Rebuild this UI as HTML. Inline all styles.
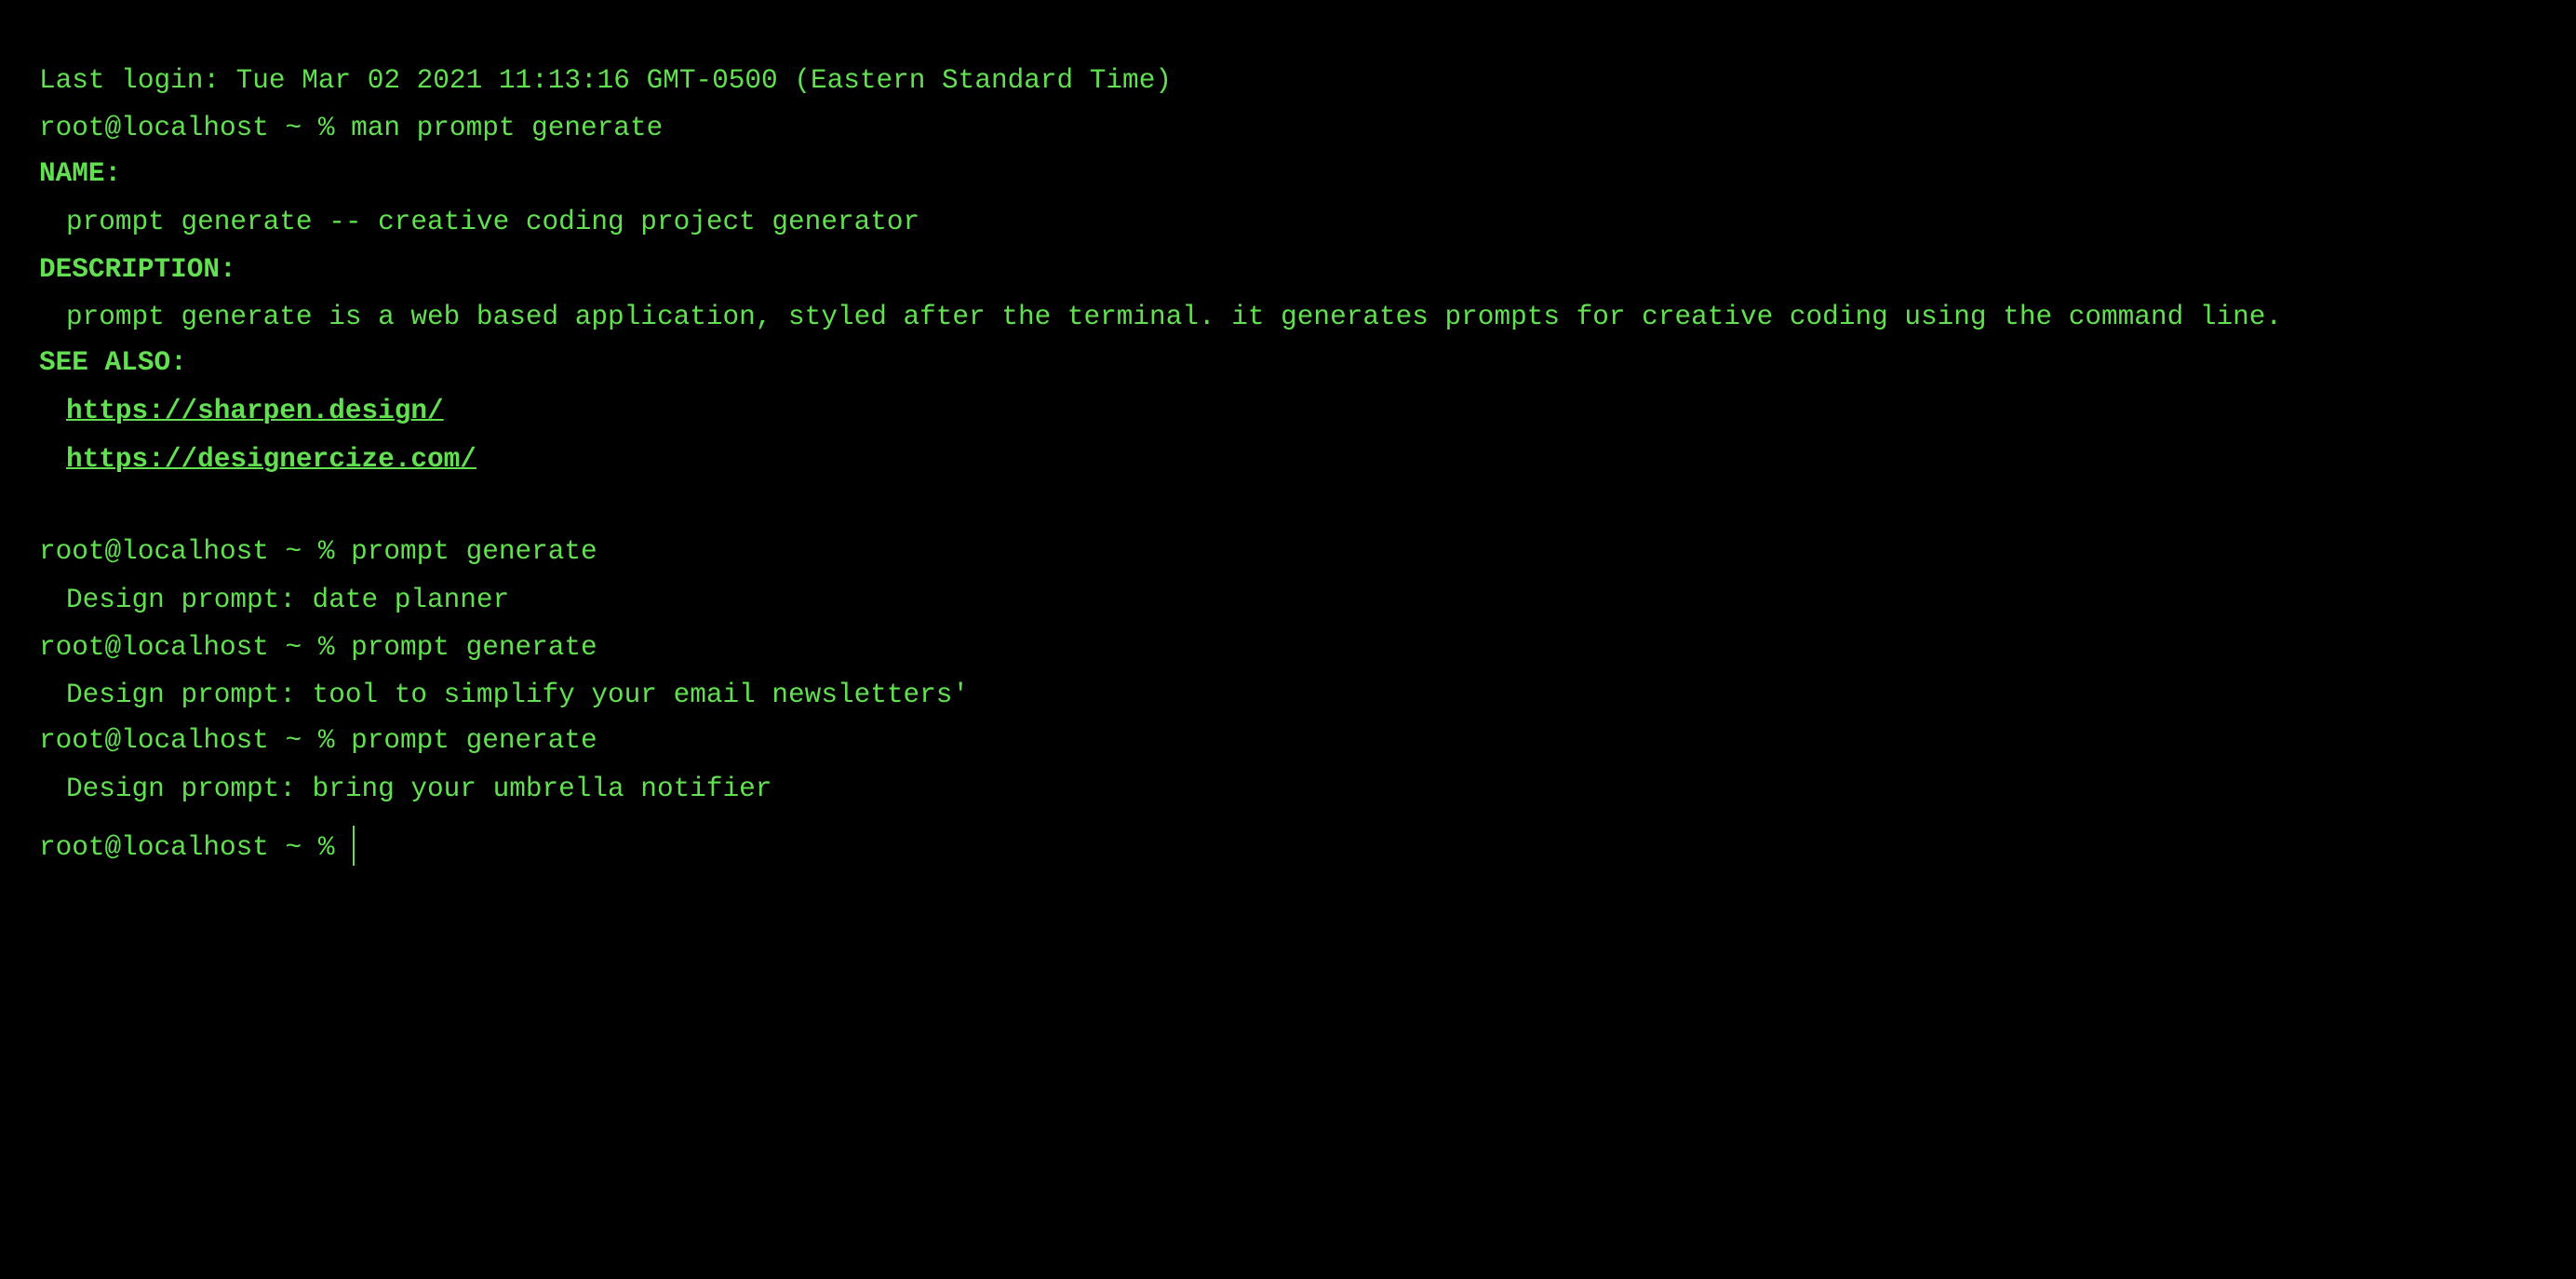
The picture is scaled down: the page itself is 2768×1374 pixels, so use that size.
<!DOCTYPE html>
<html><head><meta charset="utf-8"><style>
html,body{margin:0;padding:0;background:#000;width:2768px;height:1374px;overflow:hidden}
.l{position:absolute;left:42px;height:52px;line-height:52px;font-family:"Liberation Mono",monospace;font-size:29.4px;color:#63e052;white-space:pre}
.i{left:71px}
.b{font-weight:bold}
a{color:#63e052;font-weight:bold;text-decoration:underline;text-decoration-thickness:2px}
.c{position:absolute;left:379px;top:887px;width:2px;height:43px;background:#63e052}
</style></head><body>
<div class="l" style="top:61px">Last login: Tue Mar 02 2021 11:13:16 GMT-0500 (Eastern Standard Time)</div>
<div class="l" style="top:112px">root@localhost ~ % man prompt generate</div>
<div class="l b" style="top:161px">NAME:</div>
<div class="l i" style="top:213px">prompt generate -- creative coding project generator</div>
<div class="l b" style="top:264px">DESCRIPTION:</div>
<div class="l i" style="top:315px">prompt generate is a web based application, styled after the terminal. it generates prompts for creative coding using the command line.</div>
<div class="l b" style="top:364px">SEE ALSO:</div>
<div class="l i" style="top:416px"><a>https://sharpen.design/</a></div>
<div class="l i" style="top:468px"><a>https://designercize.com/</a></div>
<div class="l" style="top:567px">root@localhost ~ % prompt generate</div>
<div class="l i" style="top:619px">Design prompt: date planner</div>
<div class="l" style="top:670px">root@localhost ~ % prompt generate</div>
<div class="l i" style="top:721px">Design prompt: tool to simplify your email newsletters'</div>
<div class="l" style="top:770px">root@localhost ~ % prompt generate</div>
<div class="l i" style="top:822px">Design prompt: bring your umbrella notifier</div>
<div class="l" style="top:885px">root@localhost ~ %</div>
<div class="c"></div>
</body></html>
